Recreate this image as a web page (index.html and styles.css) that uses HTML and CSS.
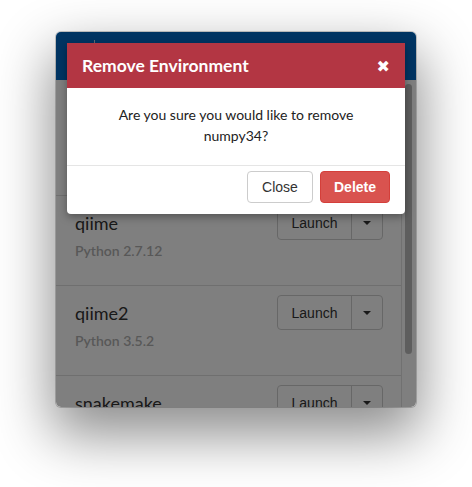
FILE: index.html
```html
<!DOCTYPE html>
<html>
<head>
<meta charset="utf-8">
<link rel="stylesheet" href="styles.css">
</head>
<body>
<div class="window">
  <div class="topbar"><span class="brand-mark"></span></div>
  <div class="content">
    <div class="list">
      <div class="env">
        <div class="env-head">
          <span class="env-name">numpy34</span>
          <div class="btn-group"><span class="btn-launch">Launch</span><span class="btn-caret"><i class="caret"></i></span></div>
        </div>
        <div class="env-ver">Python 3.4.5</div>
      </div>
      <div class="env">
        <div class="env-head">
          <span class="env-name">qiime</span>
          <div class="btn-group"><span class="btn-launch">Launch</span><span class="btn-caret"><i class="caret"></i></span></div>
        </div>
        <div class="env-ver">Python 2.7.12</div>
      </div>
      <div class="env">
        <div class="env-head">
          <span class="env-name">qiime2</span>
          <div class="btn-group"><span class="btn-launch">Launch</span><span class="btn-caret"><i class="caret"></i></span></div>
        </div>
        <div class="env-ver">Python 3.5.2</div>
      </div>
      <div class="env">
        <div class="env-head">
          <span class="env-name">snakemake</span>
          <div class="btn-group"><span class="btn-launch">Launch</span><span class="btn-caret"><i class="caret"></i></span></div>
        </div>
        <div class="env-ver">Python 3.5.2</div>
      </div>
    </div>
    <div class="scroll-track"><div class="scroll-thumb"></div></div>
  </div>
  <div class="backdrop"></div>
  <div class="modal">
    <div class="modal-header">
      <span class="modal-title">Remove Environment</span>
      <span class="modal-close">✖</span>
    </div>
    <div class="modal-body">Are you sure you would like to remove<br>numpy34?</div>
    <div class="modal-footer">
      <button class="btn btn-default">Close</button>
      <button class="btn btn-danger">Delete</button>
    </div>
  </div>
</div>
</body>
</html>
```
FILE: styles.css
```css
* { box-sizing: border-box; }
html, body { margin: 0; height: 100%; }
body {
  background: #fff;
  padding: 32px 56px;
  font-family: Lato, "Liberation Sans", sans-serif;
  overflow: hidden;
}
.window {
  position: relative;
  width: 360px;
  height: 375px;
  border-radius: 5px;
  overflow: hidden;
  display: flex;
  flex-direction: column;
  background: #fff;
  box-shadow: 0 24px 55px 4px rgba(0,0,0,0.45), 0 0 0 1px rgba(0,0,0,0.2);
}
.topbar {
  height: 48px;
  flex: none;
  background: #0068c4;
  padding: 8px 0 0 38px;
}
.brand-mark {
  display: block;
  width: 1px;
  height: 9px;
  background: #c8d4e0;
}
.content {
  flex: 1;
  display: flex;
  min-height: 0;
  background: #fff;
}
.list {
  flex: 1;
  padding-top: 26px;
  overflow: hidden;
}
.env {
  height: 90px;
  border-bottom: 1px solid #dedede;
  padding: 9px 18px 0 19px;
}
.env:last-child { border-bottom: none; }
.env-head {
  display: flex;
  align-items: center;
  justify-content: space-between;
  height: 35px;
}
.env-name {
  font-size: 18px;
  color: #333;
}
.env-ver {
  margin-top: 2px;
  font-size: 14px;
  line-height: 18px;
  font-weight: 600;
  color: #b0b0b0;
}
.btn-group {
  display: flex;
  height: 35px;
  border: 1px solid #cfcfcf;
  border-radius: 4px;
  font-family: "Liberation Sans", Arial, sans-serif;
  font-size: 14px;
  color: #333;
}
.btn-launch {
  width: 74px;
  display: flex;
  align-items: center;
  justify-content: center;
  border-right: 1px solid #cfcfcf;
}
.btn-caret {
  width: 30px;
  display: flex;
  align-items: center;
  justify-content: center;
}
.caret {
  width: 0;
  height: 0;
  border-left: 4px solid transparent;
  border-right: 4px solid transparent;
  border-top: 4px solid #333;
}
.scroll-track {
  width: 15px;
  flex: none;
  border-left: 1px solid #e2e2e2;
  padding: 4px 0 0 3px;
}
.scroll-thumb {
  width: 7px;
  height: 270px;
  border-radius: 4px;
  background: #bcbcbc;
}
.backdrop {
  position: absolute;
  inset: 0;
  background: rgba(0,0,0,0.5);
}
.modal {
  position: absolute;
  left: 11px;
  top: 11px;
  width: 338px;
  background: #fff;
  border-radius: 0 0 4px 4px;
  box-shadow: 0 3px 9px rgba(0,0,0,0.35);
}
.modal-header {
  height: 45px;
  background: #b33643;
  color: #fff;
  display: flex;
  align-items: center;
  justify-content: space-between;
  padding: 0 15px 0 15px;
}
.modal-title {
  font-size: 17.5px;
  font-weight: 700;
}
.modal-close {
  font-size: 16px;
  font-family: "DejaVu Sans", sans-serif;
  line-height: 1;
  padding-top: 2px;
}
.modal-body {
  padding: 16px 15px 19px;
  text-align: center;
  font-size: 14px;
  line-height: 21px;
  color: #222;
  border-bottom: 1px solid #e5e5e5;
}
.modal-footer {
  display: flex;
  justify-content: flex-end;
  gap: 7px;
  padding: 5px 15px 11px;
}
.btn {
  height: 32px;
  border-radius: 4px;
  font-family: "Liberation Sans", Arial, sans-serif;
  font-size: 14px;
  padding: 0;
  margin: 0;
}
.btn-default {
  width: 66px;
  background: #fff;
  border: 1px solid #ccc;
  color: #333;
}
.btn-danger {
  width: 70px;
  background: #d9534f;
  border: 1px solid #d43f3a;
  color: #fff;
  font-weight: 700;
}
```
